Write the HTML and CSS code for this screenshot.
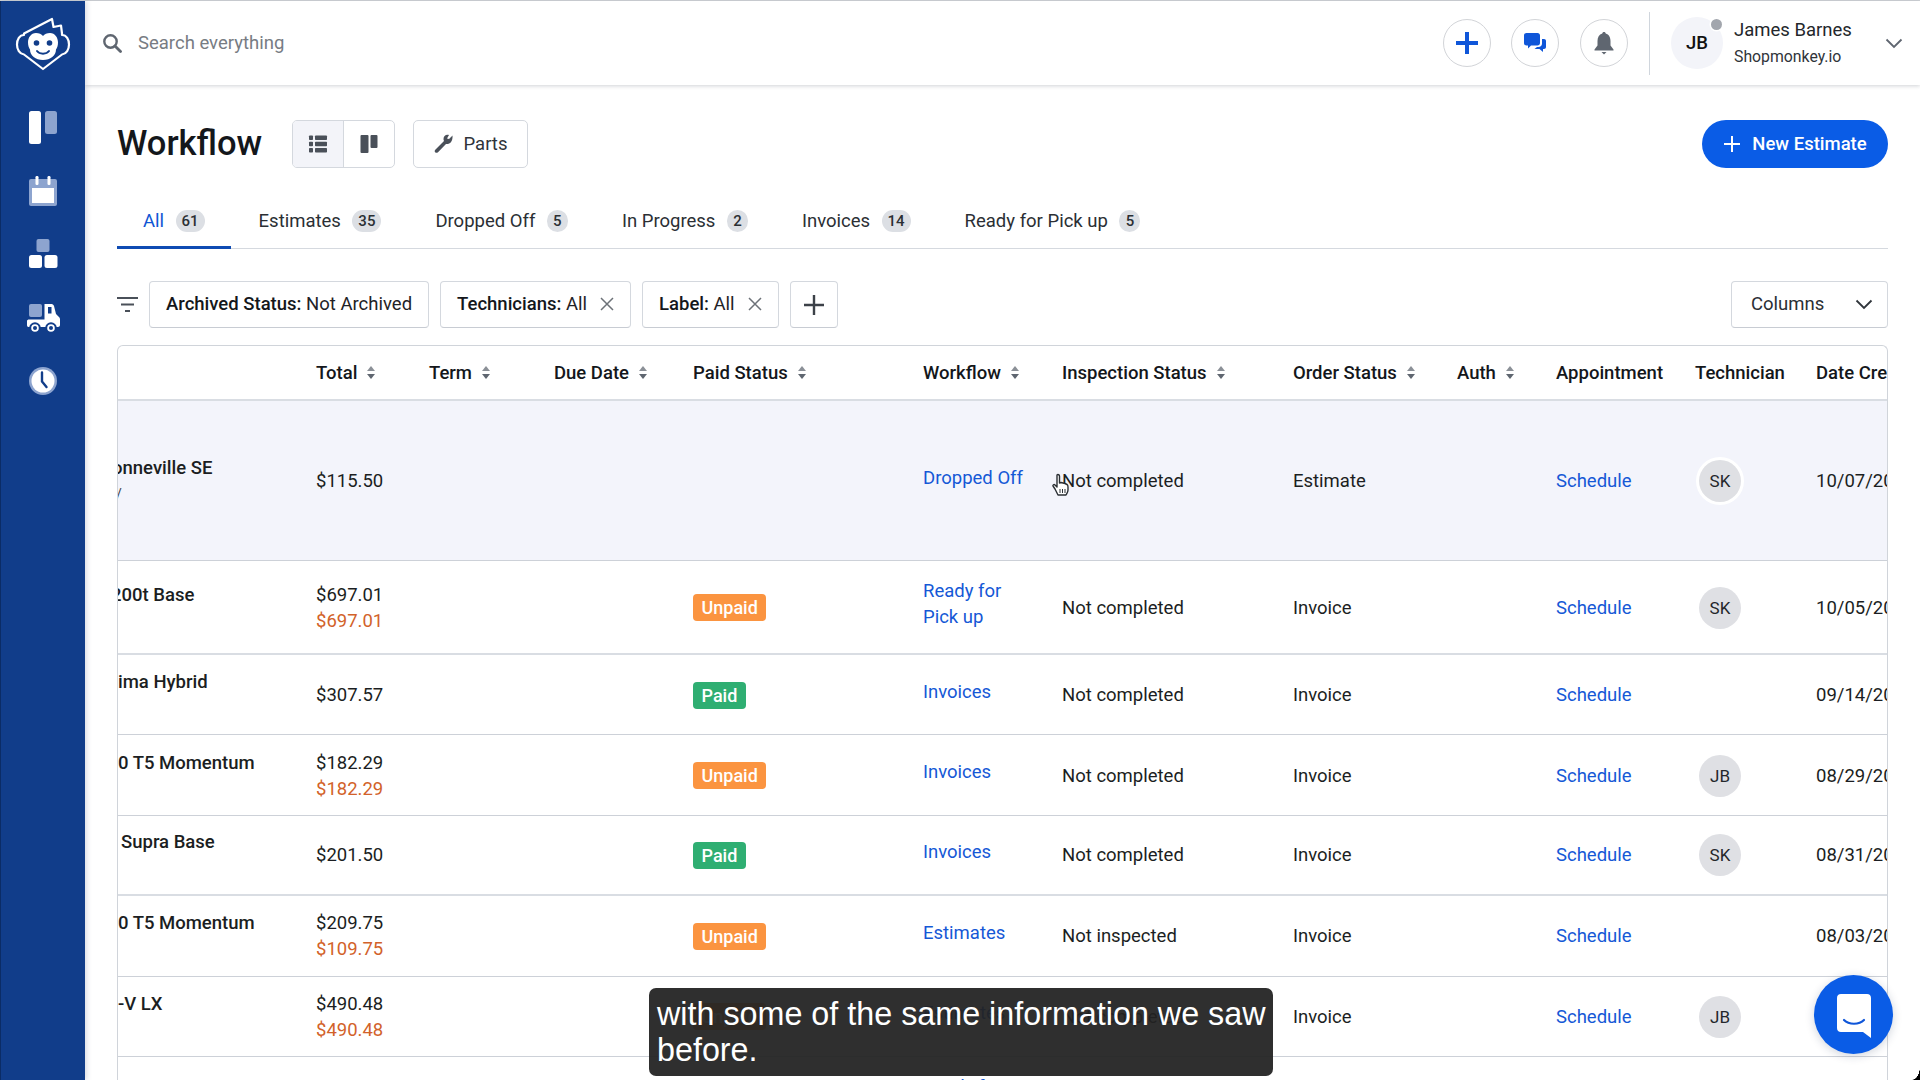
FILE: index.html
```html
<!DOCTYPE html>
<html lang="en">
<head>
<meta charset="utf-8">
<title>Workflow</title>
<link rel="stylesheet" href="styles.css">
</head>
<body>
<div class="app">
  <nav class="sidebar">
    <div class="logo">
      <svg width="56" height="56" viewBox="15 16 56 56">
        <path d="M52 19 53.500 27 61 25.500 62 33.500V35C66.500 35 69 39.500 69 44.500S66.500 54 62 54.500L43 69 24 54.500C19.500 54 17 49.500 17 44.500S19.500 35 24 35V33.500Z" fill="none" stroke="#fff" stroke-width="2.200" stroke-linejoin="round"/>
        <path d="M36 33C39 33 41.500 34 43 36 44.500 34 47 33 50 33 55 33 58 37.500 58 42.500 58 46 57 48 56 49.500 56 55.500 50.500 60 43 60S30 55.500 30 49.500C29 48 28 46 28 42.500 28 37.500 31 33 36 33Z" fill="#fff"/>
        <circle cx="36.500" cy="43" r="2.800" fill="#113d8a"/><circle cx="49.500" cy="43" r="2.800" fill="#113d8a"/>
        <path d="M37 51C39.500 54.500 46.500 54.500 49 51" fill="none" stroke="#113d8a" stroke-width="2" stroke-linecap="round"/>
      </svg>
    </div>
    <div class="side-icons">
      <svg width="36" height="36" viewBox="0 0 36 36"><rect x="4" y="2" width="12" height="33" rx="2.500" fill="#fff"/><rect x="20" y="2" width="12" height="23" rx="2.500" fill="#8da4cf"/></svg>
      <svg width="36" height="36" viewBox="0 0 36 36"><rect x="4" y="6" width="28" height="27" rx="2" fill="#8da4cf"/><rect x="7" y="15" width="22" height="15" fill="#fff"/><rect x="10.500" y="3" width="3" height="9" rx="1.200" fill="#fff"/><rect x="22.500" y="3" width="3" height="9" rx="1.200" fill="#fff"/></svg>
      <svg width="36" height="36" viewBox="0 0 36 36"><rect x="11.500" y="3" width="13" height="13" rx="2" fill="#8da4cf"/><rect x="4" y="19" width="13" height="13" rx="2.500" fill="#fff"/><rect x="19.500" y="19" width="13" height="13" rx="2.500" fill="#fff"/></svg>
      <svg width="36" height="36" viewBox="0 0 36 36"><rect x="4" y="4" width="13" height="13" rx="2" fill="#8da4cf"/><path d="M19.500 4H26.500C28 4 28.500 5 29 6L31 14 34 17C35 18 35 19 35 20V25C35 26 34 27 33 27H3.500C2.500 27 2 26 2 25V21C2 20 3 19.500 4 19.500H19.500Z" fill="#fff"/><rect x="23" y="7" width="3.500" height="6.500" fill="#113d8a"/><circle cx="10" cy="28" r="4.800" fill="#fff" stroke="#113d8a" stroke-width="2"/><circle cx="10" cy="28" r="2" fill="#113d8a"/><circle cx="26" cy="28" r="4.800" fill="#fff" stroke="#113d8a" stroke-width="2"/><circle cx="26" cy="28" r="2" fill="#113d8a"/></svg>
      <svg width="36" height="36" viewBox="0 0 36 36"><circle cx="18" cy="18" r="14" fill="#8da4cf"/><circle cx="18" cy="18" r="11.500" fill="#fff"/><path d="M17 9.500V18.500L21.500 24" fill="none" stroke="#113d8a" stroke-width="2.400" stroke-linecap="round" stroke-linejoin="round"/></svg>
    </div>
  </nav>

  <main class="main">
    <header class="topbar">
      <svg class="search-icon" width="20" height="20" viewBox="0 0 20 20"><circle cx="8.500" cy="8.500" r="6.200" fill="none" stroke="#5f6670" stroke-width="2.400"/><path d="M13 13 18.500 18.500" stroke="#5f6670" stroke-width="2.800" stroke-linecap="round"/></svg>
      <span class="search-text">Search everything</span>
      <div class="top-actions">
        <span class="round-btn"><svg width="24" height="24" viewBox="0 0 24 24"><path d="M12 1V23M1 12H23" stroke="#0f56d9" stroke-width="4"/></svg></span>
        <span class="round-btn"><svg width="24" height="24" viewBox="0 0 24 24"><path d="M3.500 2H14.500C16 2 17 3 17 4.500V12C17 13.500 16 14.500 14.500 14.500H8L5 17.500V14.500H3.500C2 14.500 1 13.500 1 12V4.500C1 3 2 2 3.500 2Z" fill="#0f56d9"/><path d="M19 8H21C22.200 8 23 8.800 23 10V16C23 17.200 22.200 18 21 18H20V21L16.500 18H11.500L14 16H15.500C17.500 16 19 14.500 19 12.500Z" fill="#0f56d9"/></svg></span>
        <span class="round-btn"><svg width="22" height="24" viewBox="0 0 22 24"><path d="M11 1C12 1 12.700 1.700 12.700 2.600 16 3.500 17.500 6.500 17.500 10V14.500L20.500 18.500V19.500H1.500V18.500L4.500 14.500V10C4.500 6.500 6 3.500 9.300 2.600 9.300 1.700 10 1 11 1Z" fill="#5f6670"/><path d="M8.500 21H13.500L11 23.500Z" fill="#5f6670"/></svg></span>
        <span class="divider"></span>
        <span class="user-avatar">JB<i class="status-dot"></i></span>
        <div class="user-text"><span class="user-name">James Barnes</span><span class="user-org">Shopmonkey.io</span></div>
        <svg class="user-chevron" width="18" height="11" viewBox="0 0 18 11"><path d="M1.500 1.500 9 9 16.500 1.500" fill="none" stroke="#5f6670" stroke-width="1.800"/></svg>
      </div>
    </header>

    <section class="content">
      <div class="title-row">
        <h1>Workflow</h1>
        <div class="view-toggle">
          <span class="view-btn active"><svg width="20" height="20" viewBox="0 0 20 20" fill="#4a5059"><rect x="1" y="1.500" width="4" height="4.500" rx=".8"/><rect x="7" y="1.500" width="12" height="4.500" rx=".8"/><rect x="1" y="7.800" width="4" height="4.500" rx=".8"/><rect x="7" y="7.800" width="12" height="4.500" rx=".8"/><rect x="1" y="14" width="4" height="4.500" rx=".8"/><rect x="7" y="14" width="12" height="4.500" rx=".8"/></svg></span>
          <span class="view-btn"><svg width="20" height="20" viewBox="0 0 20 20" fill="#4a5059"><rect x="1.500" y="1" width="8" height="18" rx="1"/><rect x="11.500" y="1" width="7" height="13" rx="1"/></svg></span>
        </div>
        <span class="parts-btn"><svg width="20" height="20" viewBox="0 0 20 20"><path d="M18.500 1.500 15 5 13 4.500 15 1C12 0 9.500 2 9.500 5C9.500 5.800 9.700 6.500 10 7L1.500 15.500C.5 16.500 .5 17.500 1.200 18.300S3 19 4 18.200L12 10C15.500 10.500 19 8 18.500 1.500Z" fill="#4a5059"/></svg>Parts</span>
        <span class="new-btn"><svg width="18" height="18" viewBox="0 0 18 18"><path d="M9 1V17M1 9H17" stroke="#fff" stroke-width="2"/></svg>New Estimate</span>
      </div>

      <div class="tabs">
        <span class="tab active">All<b>61</b></span>
        <span class="tab">Estimates<b>35</b></span>
        <span class="tab">Dropped Off<b class="one">5</b></span>
        <span class="tab">In Progress<b class="one">2</b></span>
        <span class="tab">Invoices<b>14</b></span>
        <span class="tab">Ready for Pick up<b class="one">5</b></span>
      </div>

      <div class="filters">
        <svg class="filter-icon" width="21" height="18" viewBox="0 0 21 18"><path d="M0 2H21M4 8.500H17M8 15H13" stroke="#4a5059" stroke-width="2"/></svg>
        <span class="chip"><strong>Archived Status:</strong> Not Archived</span>
        <span class="chip"><strong>Technicians:</strong> All<svg class="x" width="14" height="14" viewBox="0 0 14 14"><path d="M1 1 13 13M13 1 1 13" stroke="#6d7278" stroke-width="1.500"/></svg></span>
        <span class="chip"><strong>Label:</strong> All<svg class="x" width="14" height="14" viewBox="0 0 14 14"><path d="M1 1 13 13M13 1 1 13" stroke="#6d7278" stroke-width="1.500"/></svg></span>
        <span class="chip add"><svg width="22" height="22" viewBox="0 0 22 22"><path d="M11 1V21M1 11H21" stroke="#3c4148" stroke-width="2.400"/></svg></span>
        <span class="chip columns">Columns<svg width="18" height="11" viewBox="0 0 18 11"><path d="M1.500 1.500 9 9 16.500 1.500" fill="none" stroke="#30353b" stroke-width="1.800"/></svg></span>
      </div>

      <div class="table">
        <div class="row head">
          <span></span>
          <span>Total<i class="sort"></i></span>
          <span>Term<i class="sort"></i></span>
          <span>Due Date<i class="sort"></i></span>
          <span>Paid Status<i class="sort"></i></span>
          <span>Workflow<i class="sort"></i></span>
          <span>Inspection Status<i class="sort"></i></span>
          <span>Order Status<i class="sort"></i></span>
          <span>Auth<i class="sort"></i></span>
          <span>Appointment</span>
          <span>Technician</span>
          <span>Date Created</span>
        </div>

        <div class="row tall hover">
          <div class="vehicle clip-o"><strong>onneville SE</strong><small>/</small></div>
          <div>$115.50</div><div></div><div></div><div></div>
          <a class="flow">Dropped Off</a>
          <div>Not completed</div><div>Estimate</div><div></div>
          <a>Schedule</a>
          <div><span class="tech ring">SK</span></div>
          <div>10/07/2022</div>
        </div>

        <div class="row mid thick">
          <div class="vehicle clip-2"><strong>200t Base</strong><small>&nbsp;</small></div>
          <div class="money">$697.01<em>$697.01</em></div><div></div><div></div>
          <div><span class="badge unpaid">Unpaid</span></div>
          <a class="flow">Ready for<br>Pick up</a>
          <div>Not completed</div><div>Invoice</div><div></div>
          <a>Schedule</a>
          <div><span class="tech">SK</span></div>
          <div>10/05/2022</div>
        </div>

        <div class="row">
          <div class="vehicle"><strong>ima Hybrid</strong><small>&nbsp;</small></div>
          <div>$307.57</div><div></div><div></div>
          <div><span class="badge paid">Paid</span></div>
          <a class="flow">Invoices</a>
          <div>Not completed</div><div>Invoice</div><div></div>
          <a>Schedule</a>
          <div></div>
          <div>09/14/2022</div>
        </div>

        <div class="row">
          <div class="vehicle"><strong>0 T5 Momentum</strong><small>&nbsp;</small></div>
          <div class="money">$182.29<em>$182.29</em></div><div></div><div></div>
          <div><span class="badge unpaid">Unpaid</span></div>
          <a class="flow">Invoices</a>
          <div>Not completed</div><div>Invoice</div><div></div>
          <a>Schedule</a>
          <div><span class="tech">JB</span></div>
          <div>08/29/2022</div>
        </div>

        <div class="row thick">
          <div class="vehicle pad"><strong>Supra Base</strong><small>&nbsp;</small></div>
          <div>$201.50</div><div></div><div></div>
          <div><span class="badge paid">Paid</span></div>
          <a class="flow">Invoices</a>
          <div>Not completed</div><div>Invoice</div><div></div>
          <a>Schedule</a>
          <div><span class="tech">SK</span></div>
          <div>08/31/2022</div>
        </div>

        <div class="row">
          <div class="vehicle"><strong>0 T5 Momentum</strong><small>&nbsp;</small></div>
          <div class="money">$209.75<em>$109.75</em></div><div></div><div></div>
          <div><span class="badge unpaid">Unpaid</span></div>
          <a class="flow">Estimates</a>
          <div>Not inspected</div><div>Invoice</div><div></div>
          <a>Schedule</a>
          <div></div>
          <div>08/03/2022</div>
        </div>

        <div class="row">
          <div class="vehicle"><strong>-V LX</strong><small>&nbsp;</small></div>
          <div class="money">$490.48<em>$490.48</em></div><div></div><div></div>
          <div><span class="badge unpaid">Unpaid</span></div>
          <a class="flow">Estimates</a>
          <div>Not completed</div><div>Invoice</div><div></div>
          <a>Schedule</a>
          <div><span class="tech">JB</span></div>
          <div>08/02/2022</div>
        </div>

        <div class="row mid">
          <div class="vehicle"></div>
          <div class="money">$215.00</div><div></div><div></div><div></div>
          <a class="flow">Ready for<br>Pick up</a>
          <div></div><div></div><div></div><div></div><div></div><div></div>
        </div>
      </div>
    </section>
  </main>
</div>

<svg class="cursor" width="20" height="24" viewBox="0 0 20 24"><path d="M6 2C7 1 8.500 2 8.500 3V10L10 9.500 12 10 14 10.500 16 11.500C17 12 17 13 17 14V17C17 19 16 20 15 22H7L4 16 2 13C1.500 12 3 11 4 12L6 14Z" fill="#fff" stroke="#2b2f34" stroke-width="1.400" stroke-linejoin="round"/><path d="M9 16V20M11.500 16V20M14 16V20" stroke="#2b2f34"/></svg>

<div class="caption">with some of the same information we saw before.</div>

<div class="fab"><svg width="36" height="46" viewBox="0 0 36 46"><path d="M5 1H31C33.500 1 35 2.500 35 5V45L27 39H5C2.500 39 1 37.500 1 35V5C1 2.500 2.500 1 5 1Z" fill="#fff"/><path d="M8 27C13 32 23 32 28 27" fill="none" stroke="#0f56d9" stroke-width="2.200" stroke-linecap="round"/></svg></div>
<div class="corner"></div>
</body>
</html>
```

FILE: styles.css
```css
* { box-sizing: border-box; }
html, body { margin: 0; height: 100%; overflow: hidden; background: #fff; }
body { font-family: Roboto, "Liberation Sans", sans-serif; font-size: 18.5px; color: #1b1e22; }

.app { display: flex; height: 1080px; border-top: 1px solid #cfd2d6; }

.sidebar { width: 85px; flex: none; background: #113d8a; border-left: 1px solid #0b2c66; box-shadow: 2px 0 5px rgba(30, 50, 90, .16); position: relative; z-index: 2; }
.logo { height: 85px; display: flex; align-items: center; justify-content: center; padding-right: 1px; }
.side-icons { display: flex; flex-direction: column; align-items: center; gap: 27.5px; margin-top: 23px; padding-right: 1px; }

.main { flex: 1; min-width: 0; display: flex; flex-direction: column; }

.topbar { height: 84px; flex: none; display: flex; align-items: center; padding-left: 17px; box-shadow: 0 1px 4px rgba(40, 50, 70, .22); position: relative; z-index: 1; }
.search-text { margin-left: 16px; color: #777c83; }
.top-actions { margin-left: auto; display: flex; align-items: center; }
.round-btn { width: 48px; height: 48px; border: 1px solid #d2d4d8; border-radius: 50%; display: flex; align-items: center; justify-content: center; margin-right: 20.5px; }
.divider { width: 1px; height: 63px; background: #d0d6dd; margin-left: 1px; margin-right: 21px; }
.user-avatar { width: 52px; height: 52px; border-radius: 50%; background: #f3f4f9; display: flex; align-items: center; justify-content: center; font-weight: 500; font-size: 18.5px; color: #111; position: relative; }
.status-dot { position: absolute; top: 2px; right: 1px; width: 11px; height: 11px; border-radius: 50%; background: #a2a6ad; box-shadow: 0 0 0 1.500px #fff; }
.user-text { display: flex; flex-direction: column; margin-left: 11px; width: 151px; padding-bottom: 2px; }
.user-name { line-height: 26px; color: #24272b; }
.user-org { font-size: 15.800px; line-height: 22px; margin-top: 3px; color: #30343a; }
.user-chevron { margin-right: 17px; }

.content { flex: 1; min-height: 0; padding: 35px 32px 0 32px; }

.title-row { display: flex; align-items: center; height: 48px; }
h1 { margin: 0; padding-bottom: 2px; font-size: 34.500px; font-weight: 500; color: #14171b; width: 175px; }
.view-toggle { display: flex; border: 1px solid #d4d8de; border-radius: 5px; height: 48px; overflow: hidden; }
.view-btn { width: 50.5px; display: flex; align-items: center; justify-content: center; }
.view-btn.active { background: #f3f4f9; border-right: 1px solid #d4d8de; }
.parts-btn { margin-left: 18px; width: 115px; height: 48px; border: 1px solid #d4d8de; border-radius: 5px; display: flex; align-items: center; justify-content: center; gap: 10px; padding-bottom: 1px; color: #30343a; }
.new-btn { margin-left: auto; width: 186px; height: 48px; border-radius: 24px; background: #0a5ce6; color: #fff; font-weight: 500; display: flex; align-items: center; justify-content: center; gap: 11px; padding-bottom: 1px; }

.tabs { display: flex; gap: 2px; margin-top: 28px; border-bottom: 1px solid #d5d9df; height: 53px; }
.tab { padding: 0 26px 4px; height: 53px; display: flex; align-items: center; gap: 11.5px; color: #2b2f34; }
.tab.active { color: #0f56d4; border-bottom: 3px solid #0f4bb3; padding-bottom: 1px; }
.tab b { font-weight: 500; font-size: 15px; color: #2b2f34; background: #dcdfe4; height: 22px; min-width: 29px; border-radius: 11px; display: flex; align-items: center; justify-content: center; }
.tab b.one { min-width: 21px; }

.filters { display: flex; align-items: center; gap: 11px; margin-top: 32px; height: 47px; }
.filter-icon { margin-left: 0; }
.chip { height: 47px; border: 1px solid #d4d8de; border-bottom-color: #c8ccd3; border-radius: 4px; padding: 0 16px 1px; display: flex; align-items: center; background: #fff; white-space: pre; color: #1f2226; }
.chip strong { font-weight: 500; color: #14171b; }
.chip .x { margin-left: 13px; }
.chip.add { width: 48px; padding: 0; justify-content: center; }
.chip.columns { margin-left: auto; width: 157px; padding: 0 14px 1px 19px; justify-content: space-between; color: #2b2f34; }

.table { margin-top: 17px; border: 1px solid #d0d4da; border-bottom: 0; border-radius: 6px 6px 0 0; overflow: hidden; }

.row { display: grid; grid-template-columns: 198px 113px 125px 139px 230px 139px 231px 164px 99px 139px 121px 140px; align-items: center; height: 80.4px; padding-top: 1px; border-bottom: 1px solid #cdd1d8; white-space: nowrap; }
.row > * { min-width: 0; }
.row.head { height: 55px; padding-top: 0; border-bottom: 2px solid #d9dde3; font-weight: 500; color: #14171b; }
.row.head span { display: flex; align-items: center; gap: 10px; }
.row.tall { height: 160px; }
.row.mid { height: 94px; }
.row.hover { background: #f3f4fb; }
.row.thick { border-bottom: 2px solid #d9dde3; }

.sort { display: flex; flex-direction: column; gap: 3px; }
.sort::before, .sort::after { content: ""; width: 0; height: 0; border-left: 4px solid transparent; border-right: 4px solid transparent; }
.sort::before { border-bottom: 5.500px solid #8b9097; }
.sort::after { border-top: 5.500px solid #5f6670; }

.vehicle { overflow: hidden; display: flex; flex-direction: column; line-height: 26px; }
.vehicle strong { font-weight: 500; }
.vehicle small { font-size: 14px; line-height: 26px; height: 26px; color: #3c4148; margin-left: -2px; }
.vehicle.clip-o strong { margin-left: -6px; }
.vehicle.clip-2 strong { margin-left: -7px; }
.vehicle.pad strong { margin-left: 3px; }

.money { line-height: 26px; display: flex; flex-direction: column; }
.money em { font-style: normal; color: #d2622a; }

a { color: #1558d6; }
a.flow { line-height: 26px; padding-bottom: 7px; }

.badge { display: inline-flex; align-items: center; height: 27px; padding: 0 8.500px; border-radius: 4px; color: #fff; font-size: 18px; font-weight: 500; }
.badge.unpaid { background: #fb9440; }
.badge.paid { background: #2fae72; }

.tech { display: flex; align-items: center; justify-content: center; width: 42px; height: 42px; margin-left: 4px; border-radius: 50%; background: #dfe0e4; font-size: 17px; color: #24272b; }
.tech.ring { box-shadow: 0 0 0 3px #fff; }

.cursor { position: absolute; left: 1051px; top: 473px; z-index: 3; }

.caption { position: absolute; left: 649px; top: 988px; width: 624px; height: 88px; padding: 8px 2px 8px 8px; background: rgba(34, 34, 34, .94); border-radius: 7px; color: #fff; font-family: "Liberation Sans", Arial, sans-serif; font-size: 32.300px; line-height: 36px; z-index: 4; }

.fab { position: absolute; left: 1814px; top: 975px; width: 79px; height: 79px; border-radius: 50%; background: #0a5ce6; box-shadow: 0 2px 10px rgba(20, 40, 80, .2); display: flex; align-items: center; justify-content: center; padding-top: 3px; z-index: 4; }

.corner { position: absolute; right: 0; bottom: 0; width: 8px; height: 13px; background: radial-gradient(ellipse 8px 13px at 0 0, transparent 96%, #000 100%); z-index: 5; }
```
